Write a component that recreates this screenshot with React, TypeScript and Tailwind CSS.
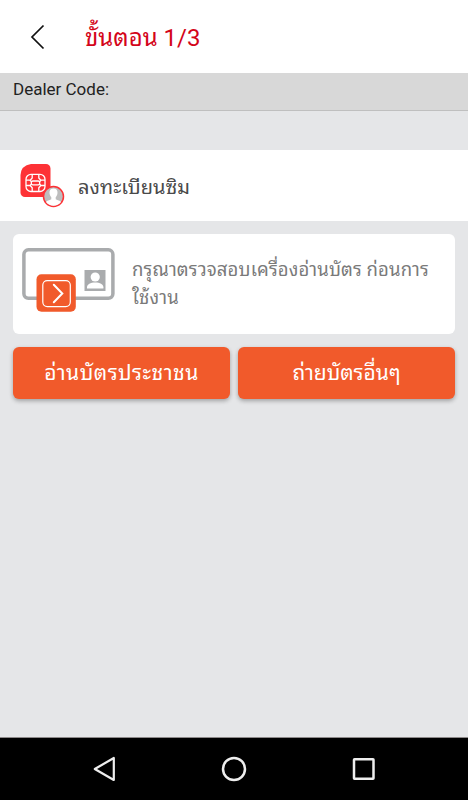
function SimIcon() {
  return (
    <svg width="46" height="44" viewBox="0 0 46 44" fill="none">
      <path d="M11 0H26a4.500 4.500 0 0 1 4.500 4.500V33H5a4.500 4.500 0 0 1-4.500-4.500V11Q1 1.500 11 0Z" fill="#fd3236" />
      <g stroke="#fff" strokeWidth="1.300">
        <rect x="6" y="10.300" width="19" height="17.200" rx="5" />
        <path d="M6 16.200h4l1.500 1.500M25 16.200h-4l-1.500 1.500M6 21.500h4l1.500-1.500M25 21.500h-4l-1.500-1.500M12.200 10.500v3.500l-2 2.200M18.800 10.500v3.500l2 2.200M12.200 27.300v-3.500l-2-2.300M18.800 27.300v-3.500l2-2.300" />
        <rect x="11.300" y="17" width="8.400" height="3.800" rx="1.600" />
      </g>
      <circle cx="33.500" cy="32.500" r="10" fill="#bdbdbd" stroke="#fd3236" strokeWidth="1.500" />
      <path d="M33.500 24.500c-3 0-4.200 2-4 4.500.2 2 1 3.500 1.800 4.300v2c-2 1-4.300 1.300-5.300 2.700 2 2.500 4.500 3.800 7.500 3.800s5.500-1.300 7.500-3.800c-1-1.400-3.300-1.700-5.300-2.700v-2c.8-.8 1.600-2.300 1.800-4.300.2-2.500-1-4.500-4-4.500Z" fill="#fff" />
    </svg>
  );
}

function CardReaderIcon() {
  return (
    <svg width="94" height="66" viewBox="0 0 94 66" fill="none">
      <rect x="1.900" y="1.800" width="89" height="48.500" rx="4.500" stroke="#a9abad" strokeWidth="3.500" />
      <rect x="62.500" y="22" width="21" height="21" fill="#a9abad" />
      <circle cx="73.200" cy="29" r="4.600" fill="#fff" />
      <path d="M65 40.500v-1.200c0-3 3.500-4.800 8.200-4.800s8.200 1.800 8.200 4.800v1.200Z" fill="#fff" />
      <rect x="14.500" y="26.300" width="39.300" height="37.500" rx="5" fill="#f15a2b" />
      <rect x="20.800" y="32.600" width="27.500" height="26" rx="4.500" stroke="#fff" strokeWidth="1.200" />
      <path d="m31.800 36.800 8.500 8.700-8.500 8.700" stroke="#fff" strokeWidth="2" strokeLinecap="round" />
    </svg>
  );
}

function NavigationBar() {
  return (
    <nav className="flex h-[63px] items-center justify-between border-t border-[#8d8989] bg-black px-[92px] pb-px">
      <button aria-label="Back">
        <svg width="26" height="26" viewBox="0 0 26 26" fill="none" stroke="#eee" strokeWidth="2.200">
          <path d="M21.800 2v22L2.800 13Z" strokeLinejoin="round" />
        </svg>
      </button>
      <button aria-label="Home">
        <svg width="26" height="26" viewBox="0 0 26 26" fill="none" stroke="#eee" strokeWidth="2.500">
          <circle cx="13" cy="13" r="11" />
        </svg>
      </button>
      <button aria-label="Overview">
        <svg width="26" height="26" viewBox="0 0 26 26" fill="none" stroke="#eee" strokeWidth="2.500">
          <rect x="4" y="3.200" width="19.500" height="19.500" rx="0.500" />
        </svg>
      </button>
    </nav>
  );
}

export default function App() {
  return (
    <div className="flex h-screen flex-col bg-[#e5e6e8] font-['Roboto','Noto_Sans_Thai_Looped','Loma','Waree','Garuda','Noto_Sans',sans-serif]">
      <header className="flex h-[73px] shrink-0 items-center bg-white pl-[30px]">
        <button aria-label="Go back">
          <svg width="16" height="26" viewBox="0 0 16 26" fill="none" stroke="#111" strokeWidth="1.700">
            <path d="M13.500 1.500 2 13l11.500 11.500" />
          </svg>
        </button>
        <h1 className="ml-[39px] pt-0.5 text-[24px] leading-8 whitespace-nowrap text-[#d4051a]">ขั้นตอน 1/3</h1>
      </header>

      <div className="h-[38px] border-b border-[#bfbfbf] bg-[#d8d8d8] pt-1 pl-[13px] text-[17px] leading-6 text-[#222]">
        Dealer Code:
      </div>

      <section className="mt-[39px] flex h-[71px] items-center bg-white pl-5">
        <SimIcon />
        <h2 className="ml-3 pt-0.5 text-[20px] tracking-[0.1px] whitespace-nowrap text-[#4a4a4a]">ลงทะเบียนซิม</h2>
      </section>

      <main className="flex-1 px-[13px] pt-[13px]">
        <div className="flex h-[100px] rounded-[6px] bg-white pt-[14px] pl-[9px]">
          <CardReaderIcon />
          <p className="ml-4 pt-2 text-[18.500px] leading-7 tracking-[0.15px] whitespace-nowrap text-[#7a7a7a]">
            กรุณาตรวจสอบเครื่องอ่านบัตร ก่อนการ
            <br />
            ใช้งาน
          </p>
        </div>
        <div className="mt-[13px] flex gap-2">
          <button className="h-[52px] flex-1 rounded-[6px] bg-[#f15a2b] pt-0.5 text-[21px] tracking-[0.500px] whitespace-nowrap text-white shadow-[0_2px_4px_rgba(0,0,0,0.3)]">
            อ่านบัตรประชาชน
          </button>
          <button className="h-[52px] flex-1 rounded-[6px] bg-[#f15a2b] pt-0.5 text-[21px] whitespace-nowrap text-white shadow-[0_2px_4px_rgba(0,0,0,0.3)]">
            ถ่ายบัตรอื่นๆ
          </button>
        </div>
      </main>

      <NavigationBar />
    </div>
  );
}
